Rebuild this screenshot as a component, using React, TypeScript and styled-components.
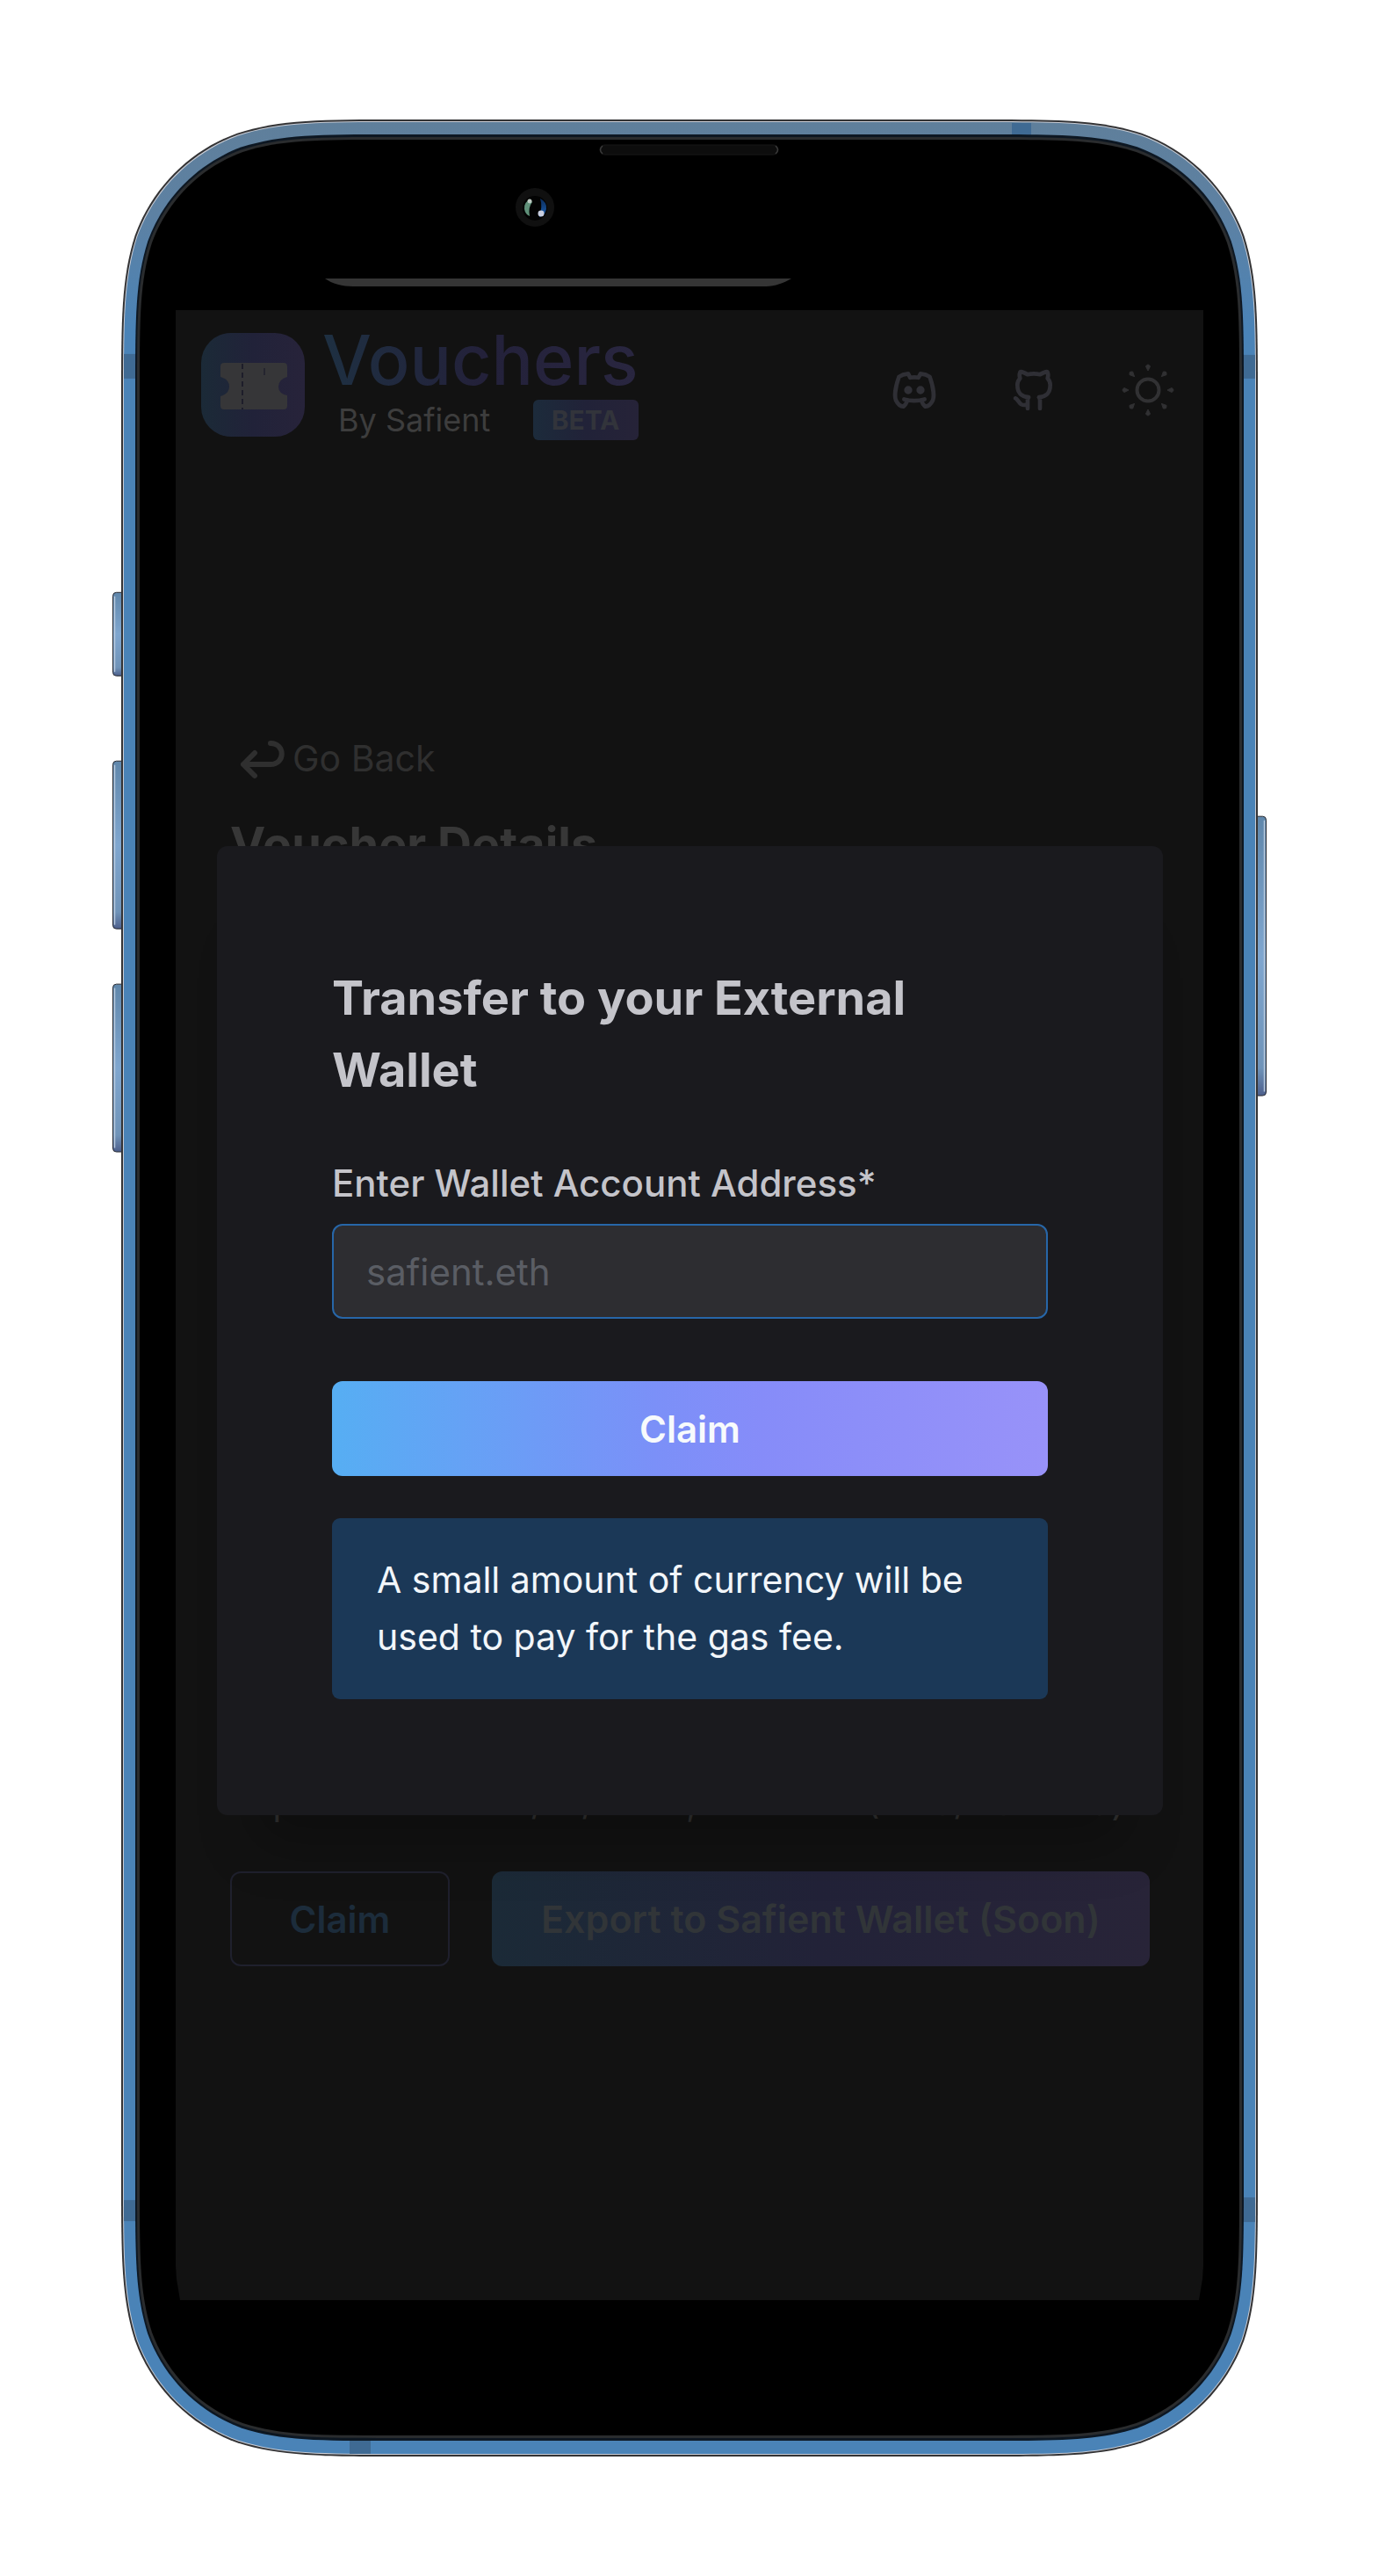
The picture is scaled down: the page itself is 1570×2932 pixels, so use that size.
import React, { useState } from "react";
import styled, { createGlobalStyle } from "styled-components";
import { TbBrandDiscord, TbBrandGithub } from "react-icons/tb";

const font = `Inter, "Liberation Sans", sans-serif`;

const GlobalStyle = createGlobalStyle`
  *, *::before, *::after { box-sizing: border-box; }
  body { margin: 0; background: #fff; font-family: ${font}; font-size: 42px; }
  h1, h2, p { margin: 0; }
  button, input { font: inherit; }
`;

/* ---------- device ---------- */

const Page = styled.div`
  display: flex;
  justify-content: center;
  padding: 136px 16px 135px;
`;

const Device = styled.div`
  position: relative;
  width: 100%;
  max-width: 1314px;
  padding: 217px 72px 178px;
`;

const Shell = styled.svg`
  position: absolute;
  inset: 0;
  width: 100%;
  height: 100%;
  display: block;
`;

const Screen = styled.div`
  position: relative;
  background: #121212;
  overflow: hidden;
  clip-path: polygon(
    0 0, 100% 0, 100% calc(100% - 40px), calc(100% - 1px) calc(100% - 24px),
    calc(100% - 5px) 100%, 5px 100%, 1px calc(100% - 24px), 0 calc(100% - 40px)
  );
`;

/** Rounded rectangle with continuous-curvature corners. */
function squircle(x: number, y: number, w: number, h: number, r: number) {
  const R = x + w;
  const B = y + h;
  const [a, b, c, d, e, f, g] = [1.5287, 1.0885, 0.8684, 0.6315, 0.0749, 0.3728, 0.1691].map((k) => k * r);
  return [
    `M${x + a} ${y}H${R - a}`,
    `C${R - b} ${y} ${R - c} ${y} ${R - d} ${y + e}C${R - f} ${y + g} ${R - g} ${y + f} ${R - e} ${y + d}`,
    `C${R} ${y + c} ${R} ${y + b} ${R} ${y + a}V${B - a}`,
    `C${R} ${B - b} ${R} ${B - c} ${R - e} ${B - d}C${R - g} ${B - f} ${R - f} ${B - g} ${R - d} ${B - e}`,
    `C${R - c} ${B} ${R - b} ${B} ${R - a} ${B}H${x + a}`,
    `C${x + b} ${B} ${x + c} ${B} ${x + d} ${B - e}C${x + f} ${B - g} ${x + g} ${B - f} ${x + e} ${B - d}`,
    `C${x} ${B - c} ${x} ${B - b} ${x} ${B - a}V${y + a}`,
    `C${x} ${y + b} ${x} ${y + c} ${x + e} ${y + d}C${x + g} ${y + f} ${x + f} ${y + g} ${x + d} ${y + e}`,
    `C${x + c} ${y} ${x + b} ${y} ${x + a} ${y}Z`,
  ].join("");
}

const sideKeys = [
  { x: 0, y: 538, h: 96 },
  { x: 0, y: 730, h: 192 },
  { x: 0, y: 984, h: 192 },
  { x: 1294, y: 793, h: 319 },
];

const antennas = [
  { x: 13, y: 267, w: 15, h: 28 },
  { x: 1286, y: 268, w: 15, h: 27 },
  { x: 13, y: 2369, w: 15, h: 24 },
  { x: 1286, y: 2366, w: 15, h: 28 },
  { x: 1024, y: 4, w: 22, h: 16 },
  { x: 270, y: 2643, w: 24, h: 15 },
];

function DeviceShell() {
  return (
    <Shell viewBox="0 0 1314 2661" preserveAspectRatio="none" aria-hidden="true">
      <defs>
        <linearGradient id="metal" x1="0" y1="0" x2="0" y2="1">
          <stop offset="0" stopColor="#5f7f9b" />
          <stop offset="0.04" stopColor="#5d81a3" />
          <stop offset="0.09" stopColor="#4a83b7" />
          <stop offset="1" stopColor="#4a83b7" />
        </linearGradient>
        <linearGradient id="key" x1="0" y1="0" x2="0" y2="1">
          <stop offset="0" stopColor="#6087ab" />
          <stop offset="0.5" stopColor="#7fa6cf" />
          <stop offset="0.9" stopColor="#6f93b8" />
          <stop offset="1" stopColor="#4d5f8c" />
        </linearGradient>
        <linearGradient id="lensBlue" x1="0" y1="0" x2="0" y2="1">
          <stop offset="0" stopColor="#0a2c5c" />
          <stop offset="1" stopColor="#1d5fae" />
        </linearGradient>
      </defs>
      {sideKeys.map((k) => (
        <g key={`${k.x}-${k.y}`}>
          <rect x={k.x + 0.5} y={k.y + 0.5} width="19" height={k.h - 1} rx="4" fill="url(#key)" stroke="#26282f" />
          <path d={`M${k.x === 0 ? 2.5 : 1311.5} ${k.y + 5}v${k.h - 10}`} stroke="#b4c6da" strokeWidth="1.5" />
        </g>
      ))}
      <path d={squircle(10, 0, 1294, 2661, 209)} fill="#333335" />
      <path d={squircle(12, 2, 1290, 2657, 207)} fill="#c9ccd4" />
      <path d={squircle(13, 3, 1288, 2655, 206)} fill="url(#metal)" />
      {antennas.map((a) => (
        <rect key={`${a.x}-${a.y}`} x={a.x} y={a.y} width={a.w} height={a.h} fill="#3f6a93" />
      ))}
      <path d={squircle(26, 17, 1262, 2626, 192)} fill="#0d1722" />
      <path d={squircle(28, 20, 1258, 2620, 189)} fill="#2a2c2e" />
      <path d={squircle(31, 23, 1252, 2614, 186)} fill="#000" />

      <rect x="555" y="29" width="203" height="11" rx="5.5" fill="#0d0d0d" stroke="#191919" />
      <path d="M558 30q-5 4.500 0 9M755 30q5 4.500 0 9" stroke="#3a3a3a" strokeWidth="1.5" fill="none" />
      <circle cx="481" cy="100" r="22" fill="#101010" />
      <circle cx="481" cy="101" r="14" fill="#030303" />
      <path d="M476 91q-8 3 -7 11q1 6 6 8q-2-10 3-16z" fill="#5f9079" />
      <path d="M487 90q8 4 7 12q-2 8-8 9q4-12 1-21z" fill="url(#lensBlue)" />
      <circle cx="475" cy="93" r="2.500" fill="#bdc9c2" />
      <circle cx="488" cy="107" r="3.500" fill="#c9cfe0" />
      <path d="M242 181H773C765 186 754 190 744 190H274C262 190 250 187 242 181Z" fill="#353535" />
    </Shell>
  );
}

/* ---------- app under the dialog ---------- */

const Header = styled.header`
  display: flex;
  justify-content: space-between;
  align-items: flex-start;
  padding: 24px 41px 0 29px;
  height: 148px;
`;

const Brand = styled.a`
  display: flex;
  gap: 20px;
  color: #3d3d3d;
  text-decoration: none;
`;

const BrandMark = styled.svg`
  width: 118px;
  height: 118px;
  margin-top: 2px;
`;

const BrandText = styled.div`
  display: flex;
  flex-direction: column;
`;

const BrandName = styled.span`
  font-size: 79px;
  line-height: 64px;
  font-weight: 500;
  background: linear-gradient(90deg, #1e3042, #23213a 50%, #292640);
  background-clip: text;
  -webkit-background-clip: text;
  color: transparent;
`;

const BrandRow = styled.div`
  display: flex;
  align-items: center;
  justify-content: space-between;
  padding-left: 18px;
  margin-top: 14px;
`;

const BrandBy = styled.span`
  font-size: 36px;
  line-height: 46px;
  font-weight: 400;
`;

const Badge = styled.span`
  width: 120px;
  border-radius: 6px;
  font-size: 30px;
  line-height: 46px;
  font-weight: 700;
  text-align: center;
  color: #32343b;
  background: linear-gradient(90deg, #1c2b3b, #212238 50%, #262338);
`;

const Nav = styled.nav`
  display: flex;
  align-items: center;
  gap: 80px;
  padding-top: 37px;
`;

const IconButton = styled.button`
  display: flex;
  justify-content: center;
  width: 44px;
  padding: 0;
  border: 0;
  background: none;
  color: #313133;
  & > svg { flex: none; }
`;

const IconLink = styled.a`
  display: flex;
  color: #2f2f35;
`;

const Main = styled.main`
  padding: 330px 61px 380px 62px;
`;

const BackLink = styled.a`
  display: inline-flex;
  align-items: center;
  gap: 7px;
  padding-left: 10px;
  color: #2f2f2f;
  text-decoration: none;
  font-size: 41px;
  line-height: 64px;
`;

const Title = styled.h1`
  font-size: 54px;
  line-height: 82px;
  font-weight: 700;
  margin-top: 23px;
  color: #373737;
`;

const Details = styled.div`
  display: flex;
  align-items: flex-end;
  gap: 60px;
  height: 1081px;
  color: #303030;
  line-height: 64px;
`;

const Actions = styled.div`
  display: grid;
  grid-template-columns: minmax(0, 1fr) minmax(0, 3fr);
  gap: 48px;
  margin-top: 47px;
`;

const Button = styled.button<{ $kind: "outline" | "muted" | "primary" }>`
  height: 108px;
  padding: 0;
  border-radius: 12px;
  font-size: ${(p) => (p.$kind === "muted" ? 43 : 42)}px;
  font-weight: 600;
  border: ${(p) => (p.$kind === "outline" ? "2px solid #1f202d" : "0")};
  color: ${(p) => ({ outline: "#1c2c3b", muted: "#313538", primary: "#f7fafc" })[p.$kind]};
  background: ${(p) =>
    ({
      outline: "none",
      muted: "linear-gradient(90deg, #1b2a37, #222238 50%, #282438)",
      primary: "linear-gradient(90deg, #56aef3, #7b90f8 45%, #868cf9 60%, #9892f9)",
    })[p.$kind]};
`;

/* ---------- dialog ---------- */

const Overlay = styled.div`
  position: absolute;
  inset: 0;
  padding: 610px 46px 0 47px;
`;

const Dialog = styled.form`
  display: flex;
  flex-direction: column;
  padding: 132px 131px;
  border-radius: 12px;
  background: #1a1a1e;
  color: #c4c4ca;
  box-shadow: 0 75px 60px -45px rgba(0, 0, 0, 0.25);
`;

const DialogTitle = styled.h2`
  font-size: 54px;
  line-height: 82px;
  font-weight: 700;
`;

const Label = styled.label`
  margin-top: 56px;
  line-height: 64px;
  font-weight: 500;
`;

const Field = styled.input`
  width: 100%;
  height: 108px;
  margin: 14px 0 71px;
  padding: 0 37px;
  border: 2px solid #2766a8;
  border-radius: 12px;
  outline: none;
  background: #2d2d31;
  color: #c4c4ca;
  &::placeholder { color: #5a5d64; opacity: 1; }
`;

const Notice = styled.p`
  margin-top: 48px;
  padding: 38px 48px 38px 51px;
  border-radius: 9px;
  background: #1b3857;
  color: #f2f6fa;
  font-size: 41px;
  line-height: 65px;
`;

function TicketMark() {
  return (
    <BrandMark viewBox="0 0 118 118" aria-hidden="true">
      <defs>
        <linearGradient id="mark" x1="0" y1="0" x2="1" y2="0">
          <stop offset="0" stopColor="#1b2a37" />
          <stop offset="0.5" stopColor="#212239" />
          <stop offset="1" stopColor="#27233a" />
        </linearGradient>
      </defs>
      <rect width="118" height="118" rx="34" fill="url(#mark)" />
      <path
        d="M26 34H94Q98 34 98 38V50Q88 53 88 61T98 71V83Q98 87 94 87H26Q22 87 22 83V72Q32 69 32 61T22 50V38Q22 34 26 34Z"
        fill="#363638"
      />
      <path d="M47 35V87" stroke="#1d1d2a" strokeWidth="2" strokeDasharray="6 4" />
      <path d="M72 40V48" stroke="#25252f" strokeWidth="2" />
    </BrandMark>
  );
}

function SunIcon() {
  return (
    <svg width="60" height="60" viewBox="-30 -30 60 60" fill="none" stroke="currentColor" aria-hidden="true">
      <circle r="12.500" strokeWidth="4" />
      {[0, 45, 90, 135, 180, 225, 270, 315].map((a) => (
        <path key={a} d="M0 -22L-2.500 -27Q0 -31 2.500 -27Z" fill="currentColor" strokeWidth="1" transform={`rotate(${a})`} />
      ))}
    </svg>
  );
}

function ReturnIcon() {
  return (
    <svg width="54" height="48" viewBox="0 0 54 48" fill="none" stroke="currentColor" strokeWidth="6" strokeLinecap="round" strokeLinejoin="round" aria-hidden="true">
      <path d="M36 7C53 7 53 31 36 31H5M18 18L5 31L18 44" />
    </svg>
  );
}

export default function App() {
  const [address, setAddress] = useState("");
  return (
    <>
      <GlobalStyle />
      <Page>
        <Device>
          <DeviceShell />
          <Screen>
            <Header>
              <Brand href="#">
                <TicketMark />
                <BrandText>
                  <BrandName>Vouchers</BrandName>
                  <BrandRow>
                    <BrandBy>By Safient</BrandBy>
                    <Badge>BETA</Badge>
                  </BrandRow>
                </BrandText>
              </Brand>
              <Nav>
                <IconLink href="#" aria-label="Discord"><TbBrandDiscord size={56} /></IconLink>
                <IconLink href="#" aria-label="GitHub"><TbBrandGithub size={56} /></IconLink>
                <IconButton type="button" aria-label="Toggle theme"><SunIcon /></IconButton>
              </Nav>
            </Header>
            <Main>
              <BackLink href="#"><ReturnIcon />Go Back</BackLink>
              <Title>Voucher Details</Title>
              <Details>
                <span>Expires on :</span>
                <span>25/12/2022, 9:42 AM (Asia/Calcutta)</span>
              </Details>
              <Actions>
                <Button type="button" $kind="outline">Claim</Button>
                <Button type="button" $kind="muted">Export to Safient Wallet (Soon)</Button>
              </Actions>
            </Main>
            <Overlay>
              <Dialog role="dialog" aria-labelledby="dialog-title" onSubmit={(e) => e.preventDefault()}>
                <DialogTitle id="dialog-title">Transfer to your External Wallet</DialogTitle>
                <Label htmlFor="address">Enter Wallet Account Address*</Label>
                <Field
                  id="address"
                  placeholder="safient.eth"
                  value={address}
                  onChange={(e) => setAddress(e.target.value)}
                />
                <Button type="submit" $kind="primary">Claim</Button>
                <Notice>A small amount of currency will be used to pay for the gas fee.</Notice>
              </Dialog>
            </Overlay>
          </Screen>
        </Device>
      </Page>
    </>
  );
}
